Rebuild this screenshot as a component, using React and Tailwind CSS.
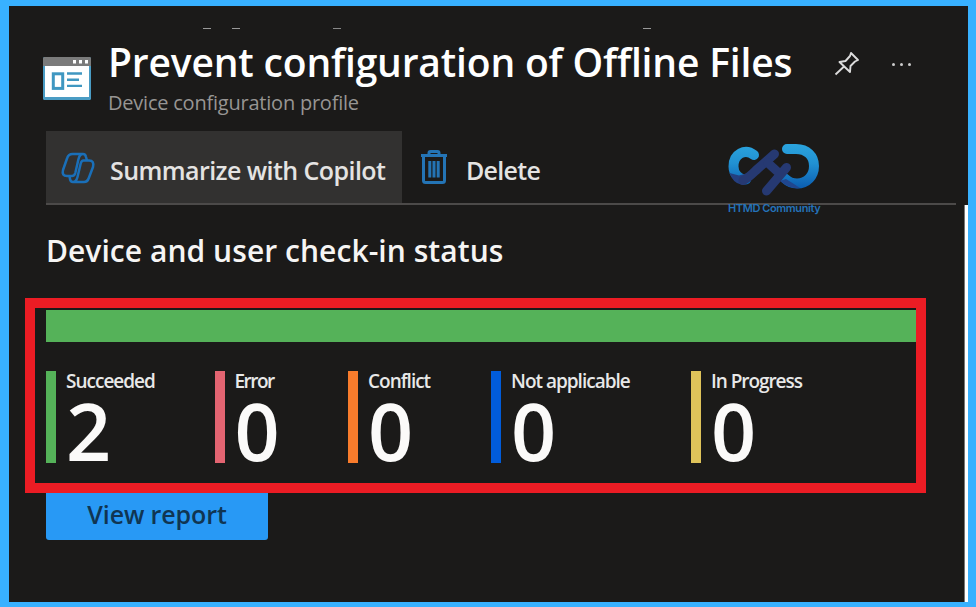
import React from "react";

const stats = [
  { label: "Succeeded", value: 2, bar: "bg-[#55b259]", width: "w-[168.5px]", spacing: "tracking-[-1px]" },
  { label: "Error", value: 0, bar: "bg-[#e36471]", width: "w-[133.5px]", spacing: "tracking-[-1.5px]" },
  { label: "Conflict", value: 0, bar: "bg-[#f97c2c]", width: "w-[143px]", spacing: "tracking-[-1px]" },
  { label: "Not applicable", value: 0, bar: "bg-[#015cda]", width: "w-[200px]", spacing: "tracking-[-1px]" },
  { label: "In Progress", value: 0, bar: "bg-[#dfc35a]", width: "w-[134px]", spacing: "tracking-[-1.050px]" },
];

function ProfileIcon() {
  return (
    <svg className="block h-[43px] w-12" viewBox="0 0 48 43">
      <rect width="48" height="43" rx="1.5" fill="#4a9cc4" />
      <rect x="2" y="8" width="44" height="32" fill="#fff" />
      <path d="M0 9V1.5Q0 0 1.5 0h45Q48 0 48 1.5V9z" fill="#7b7b7b" />
      <path d="M30 3h3v3.5h-3zM36 3h3v3.5h-3zM42 3h3v3.5h-3z" fill="#fff" />
      <rect x="10.3" y="16.8" width="9.4" height="14.6" fill="none" stroke="#3f97c1" strokeWidth="3" />
      <path d="M24 16.5h15M24 22.7h12M24 28.9h15" stroke="#3f97c1" strokeWidth="2.4" />
    </svg>
  );
}

function CopilotIcon() {
  return (
    <svg className="block h-8 w-9" viewBox="0 0 36 32" fill="none" stroke="#1a6fb8" strokeWidth="2.5" strokeLinejoin="round">
      <path d="M23 2H12.500Q8.500 2 7.200 6L3 18Q1.500 24 7 24h5Q14.500 24 15.300 21L18.500 7Q19.800 2 23 2q2.500 0 3 3l1 3.500" />
      <path d="M13 30H24q3.500 0 4.800-4L33 15q1.500-6.500-4-6.500h-5.500Q21.500 8.500 20.700 11.500L17.500 25Q16.200 30 13 30q-2.500 0-3-3L9.500 24" />
    </svg>
  );
}

function TrashIcon() {
  return (
    <svg className="block h-9 w-7" viewBox="0 0 28 36" fill="none" stroke="#2474b5" strokeWidth="3">
      <path d="M1 6.5h26M9 6V4Q9 2.500 10.500 2.500h7Q19 2.500 19 4v2" />
      <path d="M3.500 7v24.500Q3.500 33.500 5.500 33.500h17q2 0 2-2V7" />
      <path d="M9.800 12v16.500M14 12v16.500M18.200 12v16.500" strokeWidth="3" />
    </svg>
  );
}

function PinIcon() {
  return (
    <svg className="block h-7 w-7" viewBox="0 0 28 28" fill="none" stroke="#dcdcdc" strokeWidth="1.9" strokeLinejoin="round">
      <path d="M1.500 24.500L9.500 17M17 3l7 7-3 1.500-4.500 4.500-.5 6L5.500 12l6-1L16 6z" />
    </svg>
  );
}

function CommunityLogo() {
  return (
    <svg className="block h-[55px] w-[92px]" viewBox="0 0 92 55" fill="none" strokeLinecap="round">
      <defs>
        <linearGradient id="ring" x1="0" y1="0" x2="0" y2="45" gradientUnits="userSpaceOnUse">
          <stop offset="0" stopColor="#2ba5df" />
          <stop offset="0.45" stopColor="#2191d2" />
          <stop offset="1" stopColor="#0b5db0" />
        </linearGradient>
      </defs>
      <path d="M26 12C17 5 5.500 11 5.500 23.500 5.500 31 11 36.500 18 36.500" stroke="url(#ring)" strokeWidth="10" />
      <path d="M59 6H68c11 0 18 7 18 17S79 40.500 69 40.500c-5 0-9-2-12-5" stroke="url(#ring)" strokeWidth="10" />
      <path d="M1.500 30L11 32.500 24 29 33 26 24 36Q18 42 13 41.500 5 40 1.500 30z" fill="#243f80" />
      <path d="M52 38L58 36Q66 41 72 45 62 46.500 52 38z" fill="#20468e" />
      <path d="M15 37.500C21 35 26 29 30 25.500L46.500 11" stroke="#263972" strokeWidth="9" />
      <path d="M58.500 24.500L38.500 48M40 20l12 11" stroke="#263972" strokeWidth="9" />
    </svg>
  );
}

export default function App() {
  return (
    <div className="h-[607px] w-[976px] overflow-hidden bg-[#38b1ff] pl-[9px] pt-[6px] font-['Open_Sans',sans-serif]">
      <div className="relative h-[596px] w-[959px] overflow-hidden bg-[#1b1a19] text-white">
        {/* tops of the line scrolled out of view */}
        <div className="absolute left-[194px] top-[22px] h-px w-2 bg-[#999]" />
        <div className="absolute left-[223px] top-[22px] h-px w-2 bg-[#999]" />
        <div className="absolute left-[324px] top-[22px] h-px w-2 bg-[#888]" />
        <div className="absolute left-[634px] top-[22px] h-px w-2 bg-[#999]" />

        <header className="flex h-[125px] pl-[34px]">
          <div className="pt-[51px]">
            <ProfileIcon />
          </div>
          <div className="ml-[17px] w-[726px] whitespace-nowrap">
            <h1 className="mt-[32px] text-[39px] font-semibold leading-[48px] tracking-[-0.17px]">
              Prevent configuration of Offline Files
            </h1>
            <p className="mt-[3px] text-[20px] leading-[28px] tracking-[-0.22px] text-[#979593]">
              Device configuration profile
            </p>
          </div>
          <div className="pt-[44px]">
            <PinIcon />
          </div>
          <div className="ml-[30px] flex gap-[5px] pt-[57px]">
            <i className="size-[3px] rounded-full bg-[#ccc]" />
            <i className="size-[3px] rounded-full bg-[#ccc]" />
            <i className="size-[3px] rounded-full bg-[#ccc]" />
          </div>
        </header>

        <nav className="ml-[37px] flex h-[74px] w-[910px] whitespace-nowrap border-b-2 border-[#4c4a49] text-[25px] font-semibold leading-[34px] text-[#e4e3e2]">
          <div className="flex w-[356px] items-center bg-[#323130] pl-[14px]">
            <div className="mt-[1px]">
              <CopilotIcon />
            </div>
            <span className="ml-[14px] mt-[5px] tracking-[-0.57px]">Summarize with Copilot</span>
          </div>
          <div className="flex items-center pl-[18px]">
            <TrashIcon />
            <span className="ml-[18px] mt-[5px] tracking-[-0.7px]">Delete</span>
          </div>
        </nav>

        <h2 className="ml-[37px] mt-[25px] h-[68px] whitespace-nowrap text-[30px] font-semibold leading-[42px] tracking-[0.05px] text-[#f6f5f4]">
          Device and user check-in status
        </h2>

        <section className="ml-[16px] h-[195px] w-[901px] border-[10px] border-[#ec1c24] pl-[11px] pt-[2px]">
          <div className="h-8 bg-[#55b259]" />
          <div className="mt-[29px] flex">
            {stats.map((s) => (
              <div key={s.label} className={`flex h-[92px] shrink-0 ${s.width}`}>
                <div className={`w-[10px] ${s.bar}`} />
                <div className="ml-[10px] whitespace-nowrap">
                  <div className={`h-[24px] text-[19px] font-semibold leading-[21px] text-[#e8e8e8] ${s.spacing}`}>{s.label}</div>
                  <div className="text-[79px] font-semibold leading-[72px] text-[#fbfaf9]">{s.value}</div>
                </div>
              </div>
            ))}
          </div>
        </section>

        <button className="ml-[37px] block h-[47px] w-[222px] rounded-b-[3px] bg-[#2899f5] pb-[4px] text-[25px] font-semibold leading-[39px] tracking-[-0.1px] text-[#103552]">
          View report
        </button>

        <div className="absolute left-[719px] top-[137px] w-[92px]">
          <CommunityLogo />
          <p className="mt-[3px] whitespace-nowrap font-['Inter',sans-serif] text-[11px] font-semibold leading-[14px] tracking-[-0.4px] text-[#2472b8]">
            HTMD Community
          </p>
        </div>
        <div className="absolute bottom-0 right-0 top-[199px] w-[4px] border-l border-[#777] bg-white" />
      </div>
    </div>
  );
}
